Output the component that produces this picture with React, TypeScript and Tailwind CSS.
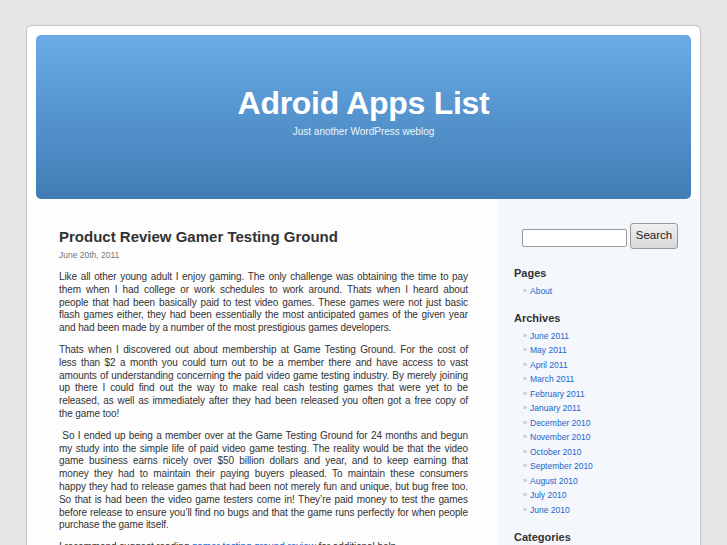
const paragraphs: string[][] = [
  [
    "Like all other young adult I enjoy gaming. The only challenge was obtaining the time to pay",
    "them when I had college or work schedules to work around. Thats when I heard about",
    "people that had been basically paid to test video games. These games were not just basic",
    "flash games either, they had been essentially the most anticipated games of the given year",
    "and had been made by a number of the most prestigious games developers.",
  ],
  [
    "Thats when I discovered out about membership at Game Testing Ground. For the cost of",
    "less than $2 a month you could turn out to be a member there and have access to vast",
    "amounts of understanding concerning the paid video game testing industry. By merely joining",
    "up there I could find out the way to make real cash testing games that were yet to be",
    "released, as well as immediately after they had been released you often got a free copy of",
    "the game too!",
  ],
  [
    "\u00a0So I ended up being a member over at the Game Testing Ground for 24 months and begun",
    "my study into the simple life of paid video game testing. The reality would be that the video",
    "game business earns nicely over $50 billion dollars and year, and to keep earning that",
    "money they had to maintain their paying buyers pleased. To maintain these consumers",
    "happy they had to release games that had been not merely fun and unique, but bug free too.",
    "So that is had been the video game testers come in! They\u2019re paid money to test the games",
    "before release to ensure you\u2019ll find no bugs and that the game runs perfectly for when people",
    "purchase the game itself.",
  ],
];

const archives = [
  "June 2011",
  "May 2011",
  "April 2011",
  "March 2011",
  "February 2011",
  "January 2011",
  "December 2010",
  "November 2010",
  "October 2010",
  "September 2010",
  "August 2010",
  "July 2010",
  "June 2010",
];

function LinkList({ items }: { items: string[] }) {
  return (
    <ul className="mt-[4px] pl-[9px]">
      {items.map((item) => (
        <li key={item} className="flex items-center gap-[1px] text-[8.5px] leading-[14.5px]">
          <span className="w-[6px] text-[7px] text-[#aaa]">»</span>
          <a href="#" className="text-[#1a66cc]">
            {item}
          </a>
        </li>
      ))}
    </ul>
  );
}

export default function App() {
  return (
    <div className="min-h-screen bg-[#e7e7e7] pt-[25px] font-['Liberation_Sans',Arial,sans-serif]">
      <div className="ml-[26px] w-[675px] rounded-t-[6px] border border-[#c4c4c4] bg-white pt-[9px] shadow-[0_0_2px_rgba(0,0,0,0.08)]">
        {/* Header */}
        <div className="mx-[9px] h-[164px] rounded-[5px] bg-linear-to-b from-[#6aabe7] to-[#3f7db4] pt-[52px] text-center text-white">
          <h1 className="text-[32px] leading-[32px] font-bold tracking-[-0.3px]">Adroid Apps List</h1>
          <div className="mt-[7px] text-[10px] leading-[12px] text-[#eef4fb]">Just another WordPress weblog</div>
        </div>

        <div className="flex">
          {/* Main column */}
          <div className="w-[470px] bg-[#fdfdfd] pt-[29px] pr-[29px] pl-[32px] text-[#333]">
            <h2 className="text-[15px] leading-[18px] font-bold text-[#333]">Product Review Gamer Testing Ground</h2>
            <div className="mt-[3px] text-[8.5px] leading-[12px] text-[#777]">June 20th, 2011</div>

            <div className="mt-[10px] text-[10px] leading-[12.8px] tracking-[-0.08px]">
              {paragraphs.map((lines, i) => (
                <p key={i} className="mb-[9px]">
                  {lines.map((line, j) => (
                    <span
                      key={j}
                      className={
                        j === lines.length - 1
                          ? "block text-left"
                          : "block text-justify [text-align-last:justify]"
                      }
                    >
                      {line}
                    </span>
                  ))}
                </p>
              ))}
              <p>
                I recommend suggest reading{" "}
                <a href="#" className="text-[#1a66cc]">
                  gamer testing ground review
                </a>{" "}
                for additional help.
              </p>
            </div>
          </div>

          {/* Sidebar */}
          <div className="w-[202px] bg-[#f4f7fb] pt-[24px] pl-[17px] text-[#333]">
            <form className="flex items-start pl-[8px]" onSubmit={(e) => e.preventDefault()}>
              <input
                type="text"
                className="mt-[6px] h-[18px] w-[105px] rounded-[2px] border border-[#9a9a9a] bg-white"
              />
              <button
                type="submit"
                className="ml-[3px] h-[26px] w-[48px] rounded-[3px] border border-[#9a9a9a] bg-linear-to-b from-[#f0f0f0] to-[#d8d8d8] text-[11.5px] text-[#222]"
              >
                Search
              </button>
            </form>

            <h3 className="mt-[17px] text-[11px] leading-[14px] font-bold">Pages</h3>
            <LinkList items={["About"]} />

            <h3 className="mt-[12px] text-[11px] leading-[14px] font-bold">Archives</h3>
            <LinkList items={archives} />

            <h3 className="mt-[13px] text-[11px] leading-[14px] font-bold">Categories</h3>
          </div>
        </div>
      </div>
    </div>
  );
}
